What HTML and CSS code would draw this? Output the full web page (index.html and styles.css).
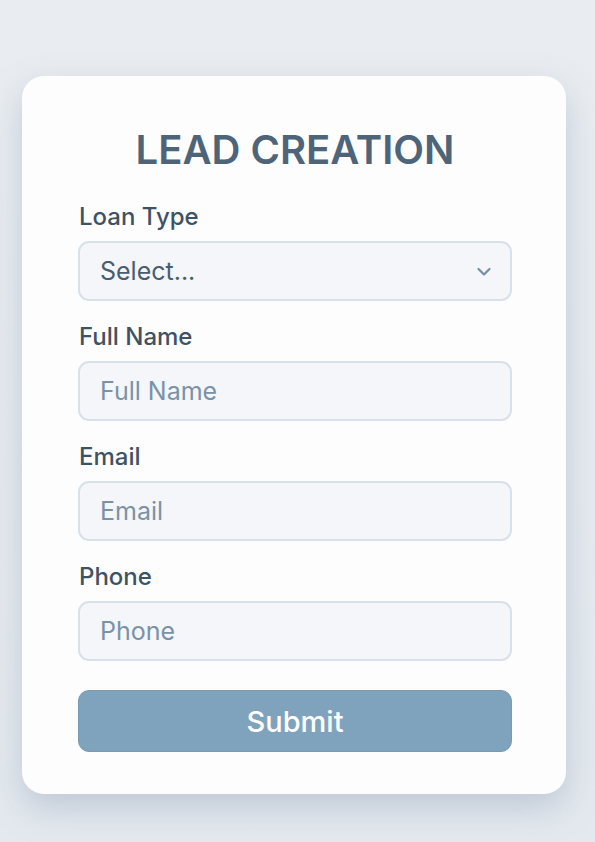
FILE: index.html
```html
<!DOCTYPE html>
<html lang="en">
  <head>
    <meta charset="UTF-8" />
    <meta name="viewport" content="width=device-width, initial-scale=1.0" />
    <title>Lead Creation</title>
    <link rel="stylesheet" href="styles.css">
  </head>
  <body>
    <!-- start lead form -->
    <form class="lead-card" onsubmit="return false">
      <h1 class="lead-title">LEAD CREATION</h1>

      <label class="field-label" for="loanType">Loan Type</label>
      <div class="select-wrap">
        <select id="loanType" class="field-input field-select">
          <option>Select...</option>
          <option>Home Loan</option>
          <option>Car Loan</option>
          <option>Personal Loan</option>
        </select>
        <svg class="select-arrow" width="16" height="10" viewBox="0 0 16 10">
          <path d="M2.5 2 L8 7.5 L13.5 2" fill="none" stroke="#7890a6" stroke-width="2.3" stroke-linecap="round" stroke-linejoin="round" />
        </svg>
      </div>

      <label class="field-label" for="fullName">Full Name</label>
      <input id="fullName" type="text" class="field-input" placeholder="Full Name" />

      <label class="field-label" for="email">Email</label>
      <input id="email" type="email" class="field-input" placeholder="Email" />

      <label class="field-label" for="phone">Phone</label>
      <input id="phone" type="tel" class="field-input" placeholder="Phone" />

      <button class="submit-btn" type="submit">Submit</button>
    </form>
    <!-- end lead form -->
  </body>
</html>
```

FILE: styles.css
```css
body {
  margin: 0;
  min-height: 842px;
  box-sizing: border-box;
  padding-top: 76px;
  background: linear-gradient(#e9edf1, #e4e9ef);
  font-family: Inter, "Noto Sans", sans-serif;
}
.lead-card {
  box-sizing: border-box;
  width: 544px;
  margin-left: 22px;
  padding: 50px 54px 42px 56px;
  background-color: #fdfdfd;
  border-radius: 22px;
  box-shadow: 0 14px 34px rgba(120, 140, 165, 0.35);
  display: flex;
  flex-direction: column;
}
.lead-title {
  margin: 0 0 29px;
  text-align: center;
  font-size: 40px;
  font-weight: 600;
  color: #4d6479;
  line-height: 48px;
}
.field-label {
  font-size: 24px;
  font-weight: 500;
  color: #3e5266;
  line-height: 28px;
  margin: 0 0 10px 1px;
}
.field-input {
  box-sizing: border-box;
  width: 100%;
  height: 60px;
  padding: 0 20px;
  margin-bottom: 22px;
  font-family: Inter, "Noto Sans", sans-serif;
  font-size: 25px;
  color: #4a5d70;
  background-color: #f4f6f9;
  border: 2px solid #d8e1ea;
  border-radius: 11px;
  outline: none;
}
.field-input::placeholder {
  color: #7a92a8;
}
.select-wrap {
  position: relative;
}
.field-select {
  appearance: none;
  -webkit-appearance: none;
}
.select-arrow {
  position: absolute;
  right: 20px;
  top: 26px;
}
.submit-btn {
  margin-top: 7px;
  height: 62px;
  border: 1px solid #779bb5;
  border-radius: 11px;
  background-color: #80a3bd;
  color: white;
  font-family: Inter, "Noto Sans", sans-serif;
  font-size: 29px;
  font-weight: 500;
  cursor: pointer;
}
```
